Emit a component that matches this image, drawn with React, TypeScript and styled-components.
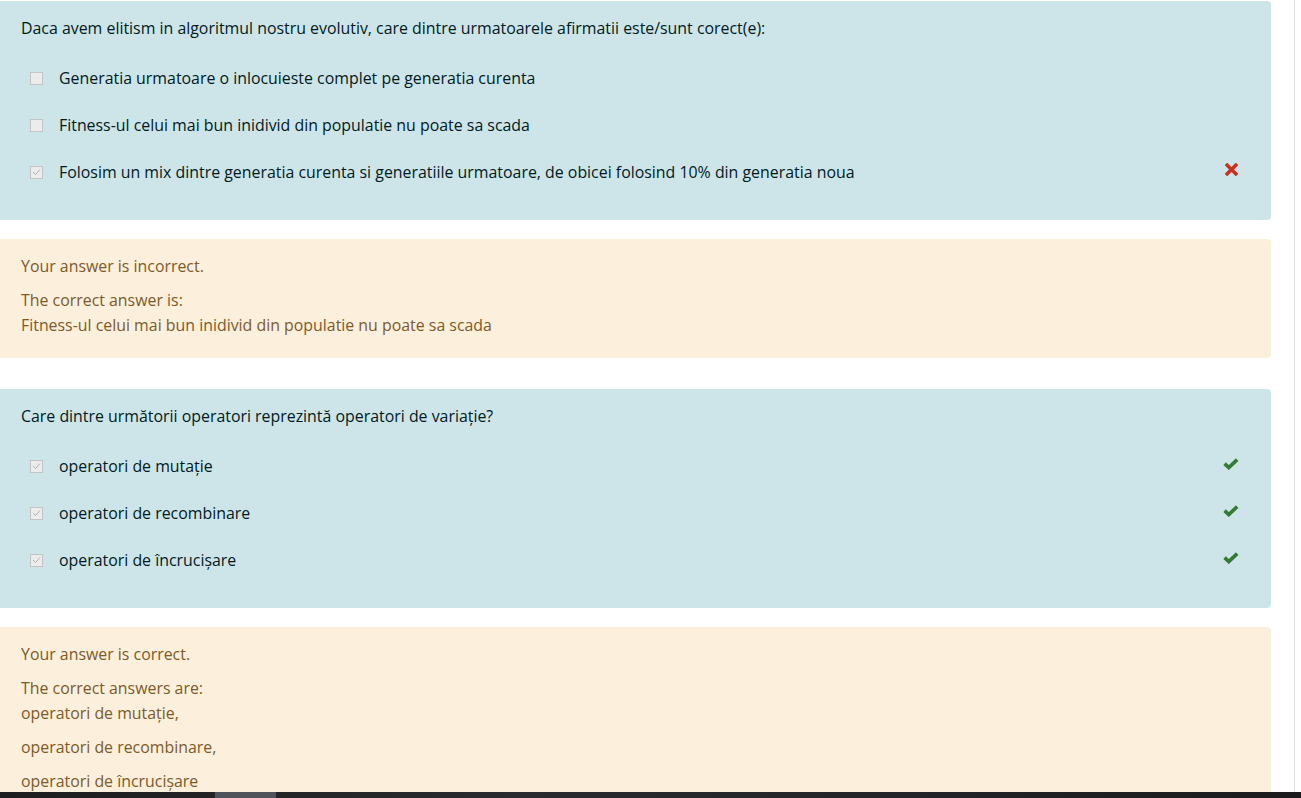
import React from "react";
import styled, { createGlobalStyle } from "styled-components";

const GlobalStyle = createGlobalStyle`
  html, body { margin: 0; padding: 0; background: #ffffff; }
  body {
    font-family: "Segoe UI", "Open Sans", sans-serif;
    font-size: 15.9px;
    line-height: 23px;
    overflow: hidden;
  }
  * { box-sizing: border-box; }
`;

const Page = styled.div`
  display: flex;
  align-items: stretch;
  min-height: 100vh;
`;

const Main = styled.main`
  width: 1271px;
  padding-top: 1px;
  display: flex;
  flex-direction: column;
`;

const Rail = styled.div`
  margin-left: 23px;
  width: 7px;
  border-left: 1px solid #dcdfe3;
`;

const Formulation = styled.section`
  background: #cde5e9;
  color: #001a1e;
  border-radius: 0 4px 4px 0;
  padding: 16px 32px 24px 21px;
`;

const QText = styled.div`
  line-height: 23px;
  margin-bottom: 15px;
`;

const Option = styled.div`
  display: flex;
  align-items: center;
  height: 47px;
`;

const Box = styled.span<{ $checked?: boolean }>`
  width: 13px;
  height: 13px;
  margin-left: 9px;
  margin-right: 16px;
  border: 1px solid #c4c4c4;
  background: #ececec;
  flex: none;
  display: flex;
  align-items: center;
  justify-content: center;
  margin-top: -1px;
`;

const Label = styled.span`
  flex: 1;
`;

const Mark = styled.span`
  width: 16px;
  display: flex;
  justify-content: center;
  margin-top: -6px;
`;

const Outcome = styled.section<{ $gapAfter?: number }>`
  background: #fcefdc;
  color: #7d5a29;
  border-radius: 0 4px 4px 0;
  margin-top: 19px;
  margin-bottom: ${(p) => p.$gapAfter ?? 0}px;
  padding: 15px 21px 20px 21px;
  line-height: 25px;
`;

const Para = styled.p`
  margin: 0 0 9px 0;
  &:last-child { margin-bottom: 0; }
`;

const BottomBar = styled.div`
  position: fixed;
  left: 0;
  right: 0;
  bottom: 0;
  height: 6px;
  background: linear-gradient(90deg, #1d1d1f 0%, #2a2b2e 40%, #232427 70%, #1b1b1d 100%);
`;

const Thumb = styled.div`
  position: absolute;
  left: 215px;
  top: 0;
  width: 61px;
  height: 6px;
  background: #50545a;
`;

const CheckGlyph = () => (
  <svg width="9" height="8" viewBox="0 0 9 8">
    <path d="M1 4 L3.5 6.5 L8 1.5" fill="none" stroke="#b0b0b0" strokeWidth="1" />
  </svg>
);

const Cross = () => (
  <svg width="13" height="13" viewBox="0 0 13 13">
    <path d="M2.2 2.2 L10.8 10.8 M10.8 2.2 L2.2 10.8" stroke="#ca3120" strokeWidth="3.6" strokeLinecap="square" />
  </svg>
);

const Tick = () => (
  <svg width="16" height="12" viewBox="0 0 16 12">
    <path d="M1.6 5.6 L5.8 9.6 L14.2 1.6" fill="none" stroke="#357a32" strokeWidth="3.6" />
  </svg>
);

type Opt = { text: string; checked: boolean; mark?: "x" | "ok" };

const Question = ({ text, options }: { text: string; options: Opt[] }) => (
  <Formulation>
    <QText>{text}</QText>
    {options.map((o) => (
      <Option key={o.text}>
        <Box $checked={o.checked}>{o.checked && <CheckGlyph />}</Box>
        <Label>{o.text}</Label>
        <Mark>{o.mark === "x" ? <Cross /> : o.mark === "ok" ? <Tick /> : null}</Mark>
      </Option>
    ))}
  </Formulation>
);

export default function App() {
  return (
    <>
      <GlobalStyle />
      <Page>
        <Main>
          <Question
            text="Daca avem elitism in algoritmul nostru evolutiv, care dintre urmatoarele afirmatii este/sunt corect(e):"
            options={[
              { text: "Generatia urmatoare o inlocuieste complet pe generatia curenta", checked: false },
              { text: "Fitness-ul celui mai bun inidivid din populatie nu poate sa scada", checked: false },
              {
                text: "Folosim un mix dintre generatia curenta si generatiile urmatoare, de obicei folosind 10% din generatia noua",
                checked: true,
                mark: "x",
              },
            ]}
          />
          <Outcome $gapAfter={31}>
            <Para>Your answer is incorrect.</Para>
            <Para>
              The correct answer is:
              <br />
              Fitness-ul celui mai bun inidivid din populatie nu poate sa scada
            </Para>
          </Outcome>
          <Question
            text="Care dintre următorii operatori reprezintă operatori de variație?"
            options={[
              { text: "operatori de mutație", checked: true, mark: "ok" },
              { text: "operatori de recombinare", checked: true, mark: "ok" },
              { text: "operatori de încrucișare", checked: true, mark: "ok" },
            ]}
          />
          <Outcome>
            <Para>Your answer is correct.</Para>
            <Para>
              The correct answers are:
              <br />
              operatori de mutație,
            </Para>
            <Para>operatori de recombinare,</Para>
            <Para>operatori de încrucișare</Para>
          </Outcome>
        </Main>
        <Rail />
      </Page>
      <BottomBar>
        <Thumb />
      </BottomBar>
    </>
  );
}
